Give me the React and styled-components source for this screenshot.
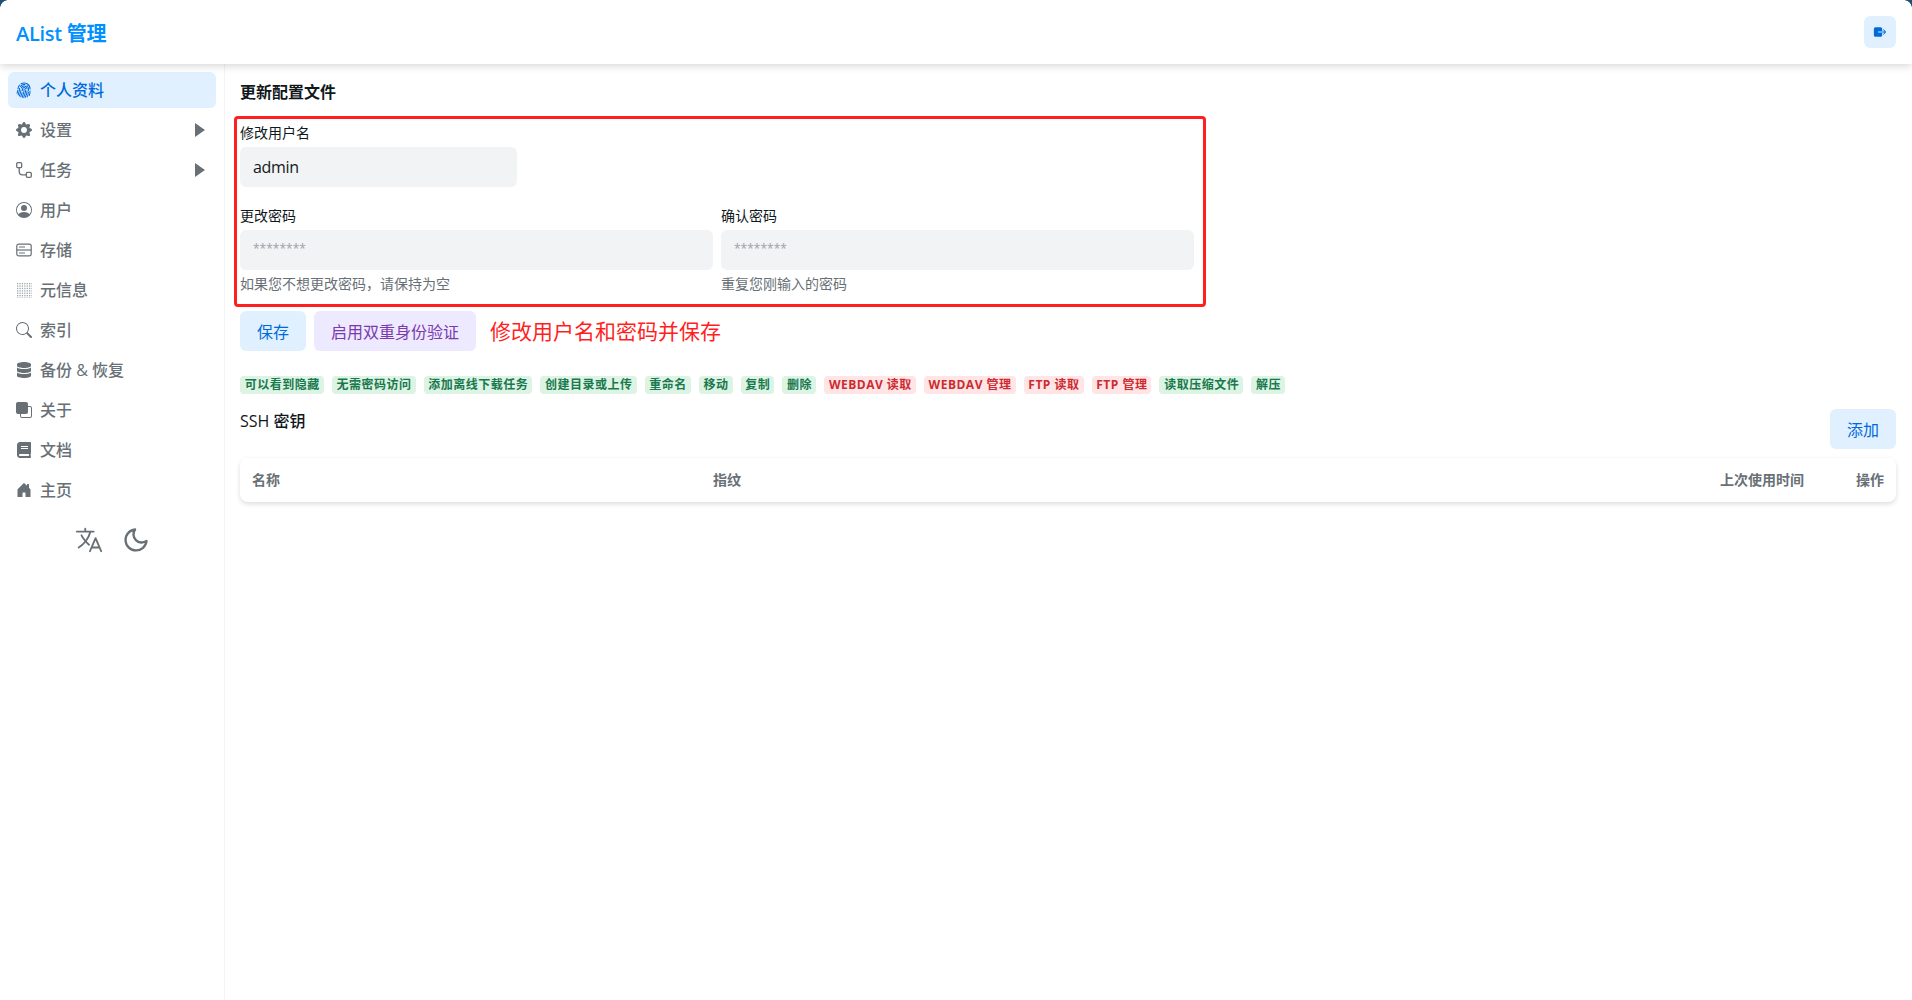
import React from "react";
import { createGlobalStyle, styled } from "styled-components";
import {
  BsFingerprint,
  BsGearFill,
  BsPersonCircle,
  BsSearch,
  BsFront,
  BsHouseDoorFill,
} from "react-icons/bs";
import { FaBook, FaDatabase } from "react-icons/fa";
import { IoExit, IoLanguageOutline } from "react-icons/io5";
import { FiMoon } from "react-icons/fi";

const GlobalStyle = createGlobalStyle`
  html, body {
    margin: 0;
    height: 100%;
    background: #fff;
    font-family: "Open Sans", "Noto Sans CJK SC", sans-serif;
    color: #11181c;
  }
  * { box-sizing: border-box; }
`;

function TaskIcon({ size }) {
  return (
    <svg width={size} height={size} viewBox="0 0 16 16" fill="none" stroke="currentColor" strokeWidth="1.3">
      <rect x="0.7" y="0.7" width="5" height="5" rx="1.2" />
      <rect x="10.3" y="10.3" width="5" height="5" rx="1.2" />
      <path d="M3.2 5.7v3.8a3.3 3.3 0 0 0 3.3 3.3h3.8" />
    </svg>
  );
}

function StorageIcon({ size }) {
  return (
    <svg width={size} height={size} viewBox="0 0 16 16" fill="none" stroke="currentColor" strokeWidth="1.2">
      <rect x="0.8" y="2.1" width="14.4" height="11.8" rx="2" />
      <path d="M0.8 8h14.4" />
      <path d="M3 5h6M3 11h6" />
    </svg>
  );
}

function MetaIcon({ size }) {
  const dots = [];
  for (let y = 1; y < 16; y += 2.4) {
    for (let x = 1; x < 16; x += 2.4) {
      dots.push(<rect key={`${x}-${y}`} x={x} y={y} width="1.3" height="1.3" />);
    }
  }
  return (
    <svg width={size} height={size} viewBox="0 0 16 16" fill="currentColor" opacity="0.6">
      {dots}
    </svg>
  );
}

function CaretIcon() {
  return (
    <Caret width="10" height="14" viewBox="0 0 10 14" fill="currentColor">
      <path d="M0 0l10 7-10 7z" />
    </Caret>
  );
}

const menu = [
  { label: "个人资料", icon: BsFingerprint, active: true },
  { label: "设置", icon: BsGearFill, arrow: true },
  { label: "任务", icon: TaskIcon, arrow: true },
  { label: "用户", icon: BsPersonCircle },
  { label: "存储", icon: StorageIcon },
  { label: "元信息", icon: MetaIcon },
  { label: "索引", icon: BsSearch },
  { label: "备份 & 恢复", icon: FaDatabase },
  { label: "关于", icon: BsFront },
  { label: "文档", icon: FaBook },
  { label: "主页", icon: BsHouseDoorFill },
];

const perms = [
  ["可以看到隐藏", true],
  ["无需密码访问", true],
  ["添加离线下载任务", true],
  ["创建目录或上传", true],
  ["重命名", true],
  ["移动", true],
  ["复制", true],
  ["删除", true],
  ["WEBDAV 读取", false],
  ["WEBDAV 管理", false],
  ["FTP 读取", false],
  ["FTP 管理", false],
  ["读取压缩文件", true],
  ["解压", true],
];

export default function App() {
  return (
    <Page>
      <GlobalStyle />
      <Corner $side="left" />
      <Corner $side="right" />
      <Header>
        <Logo>AList 管理</Logo>
        <LogoutButton>
          <IoExit size={14} />
        </LogoutButton>
      </Header>
      <Body>
        <Sidebar>
          <MenuList>
            {menu.map((item) => (
              <MenuItem key={item.label} $active={item.active}>
                <item.icon size={16} />
                <MenuLabel>{item.label}</MenuLabel>
                {item.arrow && <CaretIcon />}
              </MenuItem>
            ))}
          </MenuList>
          <SideTools>
            <IoLanguageOutline size={30} />
            <FiMoon size={28} />
          </SideTools>
        </Sidebar>
        <Content>
          <Title>更新配置文件</Title>
          <RedBox>
            <Label>修改用户名</Label>
            <NameInput defaultValue="admin" />
            <PasswordRow>
              <Field>
                <Label>更改密码</Label>
                <PassInput placeholder="********" />
                <Hint>如果您不想更改密码，请保持为空</Hint>
              </Field>
              <Field>
                <Label>确认密码</Label>
                <PassInput placeholder="********" />
                <Hint>重复您刚输入的密码</Hint>
              </Field>
            </PasswordRow>
          </RedBox>
          <Actions>
            <Button>保存</Button>
            <Button $purple>启用双重身份验证</Button>
            <Note>修改用户名和密码并保存</Note>
          </Actions>
          <Badges>
            {perms.map(([text, ok]) => (
              <Badge key={text} $ok={ok}>
                {text}
              </Badge>
            ))}
          </Badges>
          <SshHead>
            <SshTitle>SSH 密钥</SshTitle>
            <Button>添加</Button>
          </SshHead>
          <Table>
            <NameCell>名称</NameCell>
            <FingerprintCell>指纹</FingerprintCell>
            <LastUsedCell>上次使用时间</LastUsedCell>
            <div>操作</div>
          </Table>
        </Content>
      </Body>
    </Page>
  );
}

const Page = styled.div`
  position: relative;
  display: flex;
  flex-direction: column;
  height: 1000px;
  overflow: hidden;
`;

const Corner = styled.div`
  position: absolute;
  top: 0;
  ${(p) => p.$side}: 0;
  z-index: 2;
  width: 8px;
  height: 8px;
  background: radial-gradient(
    circle at ${(p) => (p.$side === "left" ? "100% 100%" : "0 100%")},
    transparent 7.5px,
    #1f4e79 8px
  );
`;

const Header = styled.header`
  display: flex;
  align-items: center;
  justify-content: space-between;
  flex: 0 0 64px;
  padding: 0 16px;
  background: #fff;
  box-shadow: 0 2px 8px rgba(0, 0, 0, 0.16);
  position: relative;
  z-index: 1;
`;

const Logo = styled.div`
  color: #0091ff;
  font-size: 20px;
  font-weight: 600;
  letter-spacing: -0.3px;
`;

const LogoutButton = styled.div`
  display: flex;
  align-items: center;
  justify-content: center;
  width: 32px;
  height: 32px;
  border-radius: 6px;
  background: #e1f0ff;
  color: #006adc;
`;

const Body = styled.div`
  display: flex;
  flex: 1;
`;

const Sidebar = styled.aside`
  flex: 0 0 225px;
  padding: 8px;
  border-right: 1px solid #f1f3f5;
`;

const MenuList = styled.div`
  display: flex;
  flex-direction: column;
  gap: 4px;
`;

const MenuItem = styled.div`
  display: flex;
  align-items: center;
  gap: 8px;
  height: 36px;
  padding: 0 8px;
  border-radius: 6px;
  font-size: 16px;
  font-weight: 500;
  color: ${(p) => (p.$active ? "#006adc" : "#687076")};
  background: ${(p) => (p.$active ? "#e1f0ff" : "transparent")};
`;

const MenuLabel = styled.span`
  flex: 1;
  padding-bottom: 2px;
`;

const Caret = styled.svg`
  margin-right: 3px;
`;

const SideTools = styled.div`
  display: flex;
  justify-content: center;
  align-items: center;
  gap: 18px;
  margin-top: 17px;
  color: #687076;
`;

const Content = styled.main`
  flex: 1;
  padding: 16px 16px 0 15px;
  min-width: 0;
`;

const Title = styled.h1`
  margin: 0 0 12px;
  font-size: 16px;
  line-height: 24px;
  font-weight: 600;
`;

const RedBox = styled.section`
  width: 972px;
  margin-left: -6px;
  padding: 4px 9px 10px 3px;
  border: 3px solid #ff1f1f;
  border-radius: 4px;
`;

const Label = styled.div`
  font-size: 14px;
  line-height: 20px;
  margin-bottom: 4px;
`;

const NameInput = styled.input`
  display: block;
  width: 277px;
  height: 40px;
  padding: 0 13px;
  border: none;
  border-radius: 6px;
  background: #f1f3f5;
  font: 16px "Open Sans", sans-serif;
  letter-spacing: -0.3px;
  color: #11181c;
`;

const PasswordRow = styled.div`
  display: grid;
  grid-template-columns: 473px 473px;
  gap: 8px;
  margin-top: 19px;
`;

const Field = styled.div`
  display: flex;
  flex-direction: column;
`;

const PassInput = styled.input`
  display: block;
  width: 100%;
  height: 40px;
  padding: 0 13px 3px;
  border: none;
  border-radius: 6px;
  background: #f1f3f5;
  font: 12px "Open Sans", sans-serif;
  &::placeholder { color: #9ba1a6; }
`;

const Hint = styled.div`
  margin-top: 4px;
  font-size: 14px;
  line-height: 20px;
  color: #687076;
`;

const Actions = styled.div`
  display: flex;
  align-items: center;
  gap: 8px;
  margin-top: 4px;
`;

const Button = styled.div`
  display: inline-flex;
  align-items: center;
  justify-content: center;
  height: 40px;
  padding: 0 17px 1px;
  border-radius: 6px;
  font-size: 16px;
  color: ${(p) => (p.$purple ? "#793aaf" : "#006adc")};
  background: ${(p) => (p.$purple ? "#ede9fe" : "#e1f0ff")};
`;

const Note = styled.span`
  margin-left: 6px;
  padding-bottom: 2px;
  font-size: 21px;
  color: #ff1f1f;
`;

const Badges = styled.div`
  display: flex;
  gap: 8px;
  margin-top: 25px;
`;

const Badge = styled.span`
  height: 18px;
  padding: 0 4px 0 4.75px;
  border-radius: 4px;
  font-size: 12px;
  line-height: 18px;
  font-weight: 700;
  letter-spacing: 0.5px;
  color: ${(p) => (p.$ok ? "#18794e" : "#cd2b31")};
  background: ${(p) => (p.$ok ? "#ddf3e4" : "#ffe5e5")};
`;

const SshHead = styled.div`
  display: flex;
  justify-content: space-between;
  align-items: flex-start;
  margin-top: 15px;
`;

const SshTitle = styled.h2`
  margin: 0;
  font-size: 16px;
  line-height: 24px;
  font-weight: 500;
`;

const Table = styled.div`
  display: flex;
  align-items: center;
  height: 44px;
  margin-top: 9px;
  padding: 0 12px 2px;
  border-radius: 8px;
  box-shadow: 0 2px 5px rgba(0, 0, 0, 0.14);
  font-size: 14px;
  font-weight: 600;
  color: #687076;
`;

const NameCell = styled.div`
  width: 461px;
`;

const FingerprintCell = styled.div`
  flex: 1;
`;

const LastUsedCell = styled.div`
  margin-right: 52px;
`;
